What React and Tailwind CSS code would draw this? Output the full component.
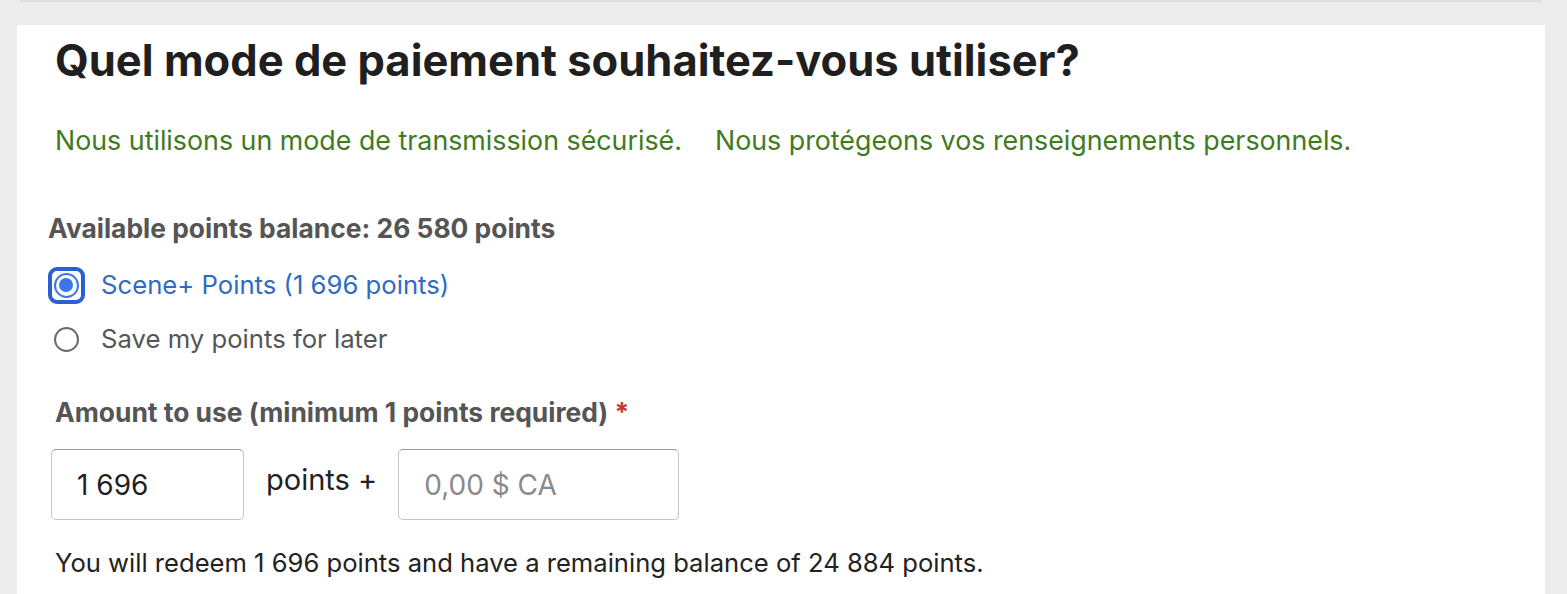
import React, { useState } from 'react';

const font = { fontFamily: 'Inter, "Noto Sans", sans-serif' };

function Radio({ checked, label, onSelect }) {
  return (
    <label onClick={onSelect} className="flex items-center cursor-pointer h-[38px]">
      <span className="w-[38px] h-[38px] flex items-center justify-center shrink-0">
        {checked ? (
          <span className="w-[37px] h-[37px] rounded-[9px] border-[4px] border-[#2c5fd0] flex items-center justify-center">
            <span className="w-[25px] h-[25px] rounded-full border-[2px] border-[#3b78e7] flex items-center justify-center">
              <span className="w-[14px] h-[14px] rounded-full bg-[#3b78e7]"></span>
            </span>
          </span>
        ) : (
          <span className="w-[25px] h-[25px] rounded-full border-[2px] border-[#6b6b6b]"></span>
        )}
      </span>
      <span className={`ml-[16px] text-[25.7px] ${checked ? 'text-[#2f6bc4]' : 'text-[#555555]'}`}>{label}</span>
    </label>
  );
}

export default function App() {
  const [choice, setChoice] = useState('scene');
  const [amount, setAmount] = useState('1 696');

  return (
    <div style={font} className="min-h-[594px] bg-[#ececec] pl-[17px] pr-[22px] pt-[25px] relative">
      {/* thin stripe from the section above */}
      <div className="absolute top-0 left-[20px] right-[25px] h-[2px] bg-[#e0e0e0]"></div>

      <div className="bg-white min-h-[569px] pl-[31px] pt-[11px]">
        <h1 className="text-[43.5px] font-bold text-[#1f1f1f] leading-[48px] pl-[7px]">
          Quel mode de paiement souhaitez-vous utiliser?
        </h1>

        <div className="flex gap-[33px] mt-[41px] pl-[7px] text-[26.8px] text-[#3f7a1f] leading-[30px]">
          <span>Nous utilisons un mode de transmission sécurisé.</span>
          <span>Nous protégeons vos renseignements personnels.</span>
        </div>

        <div className="mt-[58px] text-[26.4px] font-bold text-[#555555] leading-[30px]">
          Available points balance: 26 580 points
        </div>

        <div className="mt-[23px] flex flex-col gap-[16px] ml-[-1px]">
          <Radio checked={choice === 'scene'} label="Scene+ Points (1 696 points)" onSelect={() => setChoice('scene')} />
          <Radio checked={choice === 'later'} label="Save my points for later" onSelect={() => setChoice('later')} />
        </div>

        <div className="mt-[39px] pl-[7px] text-[26.4px] font-bold text-[#555555] leading-[30px]">
          Amount to use (minimum 1 points required) <span className="text-[#c8372d]">*</span>
        </div>

        <div className="mt-[22px] flex items-start pl-[3px]">
          <input
            value={amount}
            onChange={(e) => setAmount(e.target.value)}
            className="w-[193px] h-[71px] border border-[#c4c4c4] border-t-[#9a9a9a] rounded-[5px] px-[25px] text-[28px] text-[#1f1f1f] outline-none"
          />
          <span className="ml-[22px] mt-[13px] text-[29px] text-[#222222] leading-[36px]">points +</span>
          <input
            placeholder="0,00 $ CA"
            className="ml-[21px] w-[281px] h-[71px] border border-[#c4c4c4] border-t-[#9a9a9a] rounded-[5px] px-[25px] text-[28px] text-[#1f1f1f] placeholder-[#8a8a8a] outline-none"
          />
        </div>

        <div className="mt-[28px] pl-[7px] text-[25.6px] text-[#222222] leading-[30px]">
          You will redeem 1 696 points and have a remaining balance of 24 884 points.
        </div>
      </div>
    </div>
  );
}
